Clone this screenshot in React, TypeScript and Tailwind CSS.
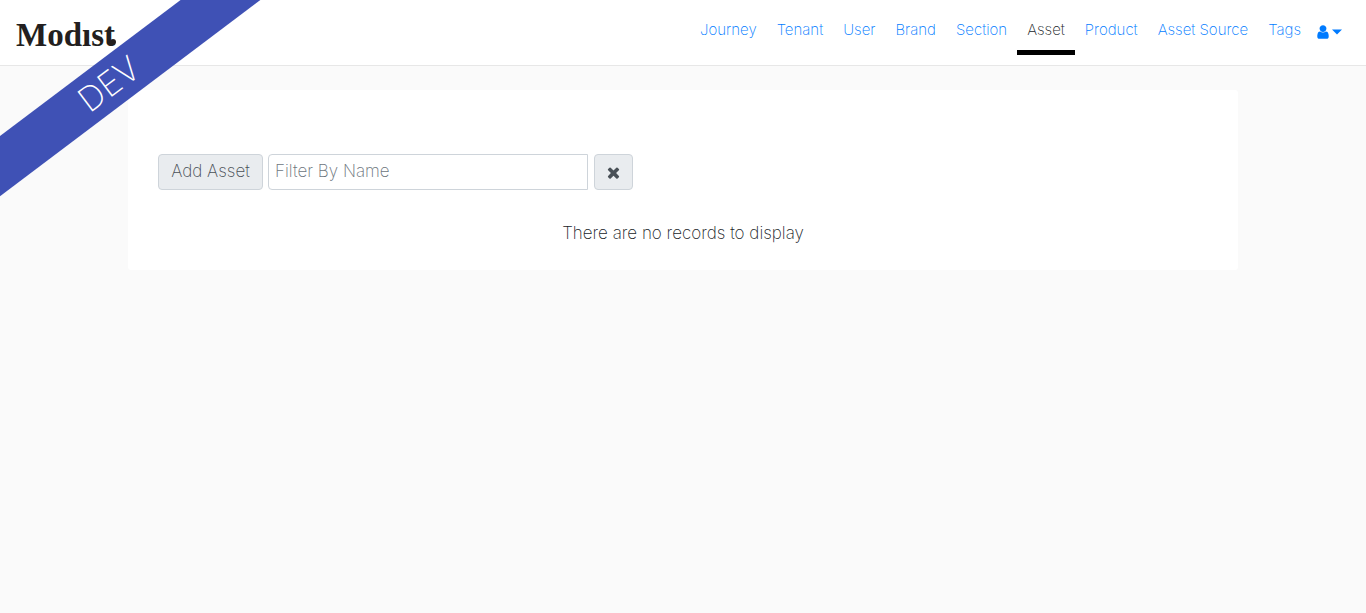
const links = ["Journey", "Tenant", "User", "Brand", "Section", "Asset", "Product", "Asset Source", "Tags"];

function Logo() {
  return (
    <svg role="img" aria-label="Modist" width="104" height="44" viewBox="0 0 104 44" className="block">
      <text x="0" y="34" fontSize="33" fontWeight="700" fill="#231f20" fontFamily="'Liberation Serif', serif">
        Modıst
      </text>
      <circle cx="97" cy="30" r="3" fill="#231f20" />
    </svg>
  );
}

function UserIcon() {
  return (
    <svg aria-hidden="true" width="12" height="16" viewBox="0 0 1280 1792" fill="currentColor">
      <path d="M1280 1399q0 109-62.5 187t-150.5 78h-854q-88 0-150.5-78t-62.5-187q0-85 8.5-160.5t31.5-152 58.5-131 94-89 134.5-34.5q131 128 313 128t313-128q76 0 134.5 34.5t94 89 58.5 131 31.5 152 8.5 160.5zm-256-887q0 159-112.5 271.5t-271.5 112.5-271.5-112.5-112.5-271.5 112.5-271.5 271.5-112.5 271.5 112.5 112.5 271.5z" />
    </svg>
  );
}

function CaretIcon() {
  return (
    <svg aria-hidden="true" width="10" height="6" viewBox="0 0 10 6" fill="currentColor">
      <path d="M0 0.5h10L5 5.5z" />
    </svg>
  );
}

function TimesIcon() {
  return (
    <svg aria-hidden="true" width="17" height="17" viewBox="0 0 1792 1792" fill="currentColor">
      <path d="M1490 1322q0 40-28 68l-136 136q-28 28-68 28t-68-28l-294-294-294 294q-28 28-68 28t-68-28l-136-136q-28-28-28-68t28-68l294-294-294-294q-28-28-28-68t28-68l136-136q28-28 68-28t68 28l294 294 294-294q28-28 68-28t68 28l136 136q28 28 28 68t-28 68l-294 294 294 294q28 28 28 68z" />
    </svg>
  );
}

function Ribbon() {
  return (
    <div className="pointer-events-none absolute top-[60px] left-[-91px] h-12 w-[400px] -rotate-37 bg-[#3f51b5] text-center text-[34px] leading-[48px] text-white">
      DEV
    </div>
  );
}

function Header() {
  return (
    <header className="flex h-[66px] items-start justify-between border-b border-[#e7e7e7] bg-white px-4">
      <a href="#home" className="pt-3">
        <Logo />
      </a>
      <nav className="flex pt-[10px] pr-2 text-[15px] leading-10">
        {links.map((name) => (
          <a
            key={name}
            href={"#" + name.toLowerCase().replace(" ", "-")}
            aria-current={name === "Asset" ? "page" : undefined}
            className={
              name === "Asset"
                ? "border-b-[5px] border-black px-[10px] text-[#212529]"
                : "border-b-[5px] border-transparent px-[10px] text-[#007bff]"
            }
          >
            {name}
          </a>
        ))}
        <button type="button" aria-label="Account menu" className="ml-[6px] flex h-11 items-center gap-[3px] text-[#007bff]">
          <UserIcon />
          <CaretIcon />
        </button>
      </nav>
    </header>
  );
}

export default function App() {
  return (
    <div className="relative min-h-screen overflow-hidden bg-[#fafafa] font-['Inter','Liberation_Sans',sans-serif] font-extralight text-[#212529]">
      <Header />
      <main className="mx-auto max-w-[1140px] px-[15px] pt-6">
        <section className="rounded-[3px] bg-white px-[30px] pt-16 pb-[25px]">
          <div className="flex h-9">
            <button type="button" className="mr-[5px] w-[105px] rounded-[4px] border border-[#ced4da] bg-[#e9ecef] text-[17px] text-[#495057]">
              Add Asset
            </button>
            <input
              type="text"
              aria-label="Filter By Name"
              placeholder="Filter By Name"
              className="mr-[6px] w-80 rounded-l-[4px] border border-[#ced4da] bg-white px-[6px] text-[17px] placeholder:text-[#6c757d]"
            />
            <button type="button" aria-label="Clear filter" className="flex w-[39px] items-center justify-center rounded-[4px] border border-[#ced4da] bg-[#e9ecef] text-[#495057]">
              <TimesIcon />
            </button>
          </div>
          <p className="pt-[31px] text-center text-[17px] leading-6">There are no records to display</p>
        </section>
      </main>
      <Ribbon />
    </div>
  );
}
